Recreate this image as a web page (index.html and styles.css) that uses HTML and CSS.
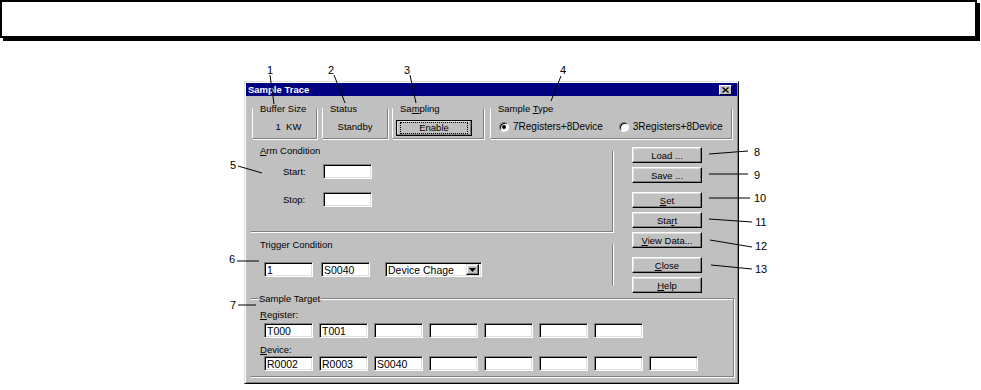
FILE: index.html
```html
<!DOCTYPE html>
<html>
<head>
  <title>Sample Trace</title>
  <link rel="stylesheet" href="styles.css">
</head>
<body>
  <div class="page">
    <div class="frame"></div>

    <div class="stage">
      <div class="dlg">
        <div class="cap">
          <span>Sample Trace</span>
          <span class="capx">
            <svg width="7" height="6" viewBox="0 0 7 6"><path d="M0.5 0.5 L6.5 5.5 M6.5 0.5 L0.5 5.5" stroke="#000" stroke-width="1.3"/></svg>
          </span>
        </div>

        <div class="row1">
          <div class="grp buf">
            <div class="ttl">Buffer Size</div>
            <div class="val">1 &nbsp;KW</div>
          </div>
          <div class="grp stat">
            <div class="ttl">Status</div>
            <div class="val">Standby</div>
          </div>
          <div class="grp samp">
            <div class="ttl">Sa<u>m</u>pling</div>
            <div class="btn def"><span class="focus">Enable</span></div>
          </div>
          <div class="grp type">
            <div class="ttl">Sample <u>T</u>ype</div>
            <div class="radios">
              <span class="radio on"></span><span class="rlbl">7Registers+8Device</span>
              <span class="radio r2"></span><span class="rlbl">3Registers+8Device</span>
            </div>
          </div>
        </div>

        <div class="mid">
          <div class="left">
            <div class="grp2 arm">
              <div class="ttl"><u>A</u>rm Condition</div>
              <div class="armrows">
                <span>Start:</span><span class="fld"></span>
                <span>Stop:</span><span class="fld"></span>
              </div>
            </div>
            <div class="grp2 trg">
              <div class="ttl">Trigger Condition</div>
              <div class="trgrow">
                <span class="fld">1</span>
                <span class="fld">S0040</span>
                <span class="fld sel">Device Chage<span class="arrow"><svg width="7" height="4" viewBox="0 0 7 4"><path d="M0 0 H7 L3.5 4 Z" fill="#000"/></svg></span></span>
              </div>
            </div>
          </div>

          <div class="btns">
            <div class="bgrp">
              <div class="btn">Load ...</div>
              <div class="btn">Save ...</div>
            </div>
            <div class="bgrp">
              <div class="btn"><u>S</u>et</div>
              <div class="btn">Sta<u>r</u>t</div>
              <div class="btn"><u>V</u>iew Data...</div>
            </div>
            <div class="bgrp">
              <div class="btn"><u>C</u>lose</div>
              <div class="btn"><u>H</u>elp</div>
            </div>
          </div>
        </div>

        <div class="grp3">
          <div class="ttl">Sample Target</div>
          <div class="sub"><u>R</u>egister:</div>
          <div class="fields">
            <span class="fld">T000</span>
            <span class="fld">T001</span>
            <span class="fld"></span>
            <span class="fld"></span>
            <span class="fld"></span>
            <span class="fld"></span>
            <span class="fld"></span>
          </div>
          <div class="sub dev"><u>D</u>evice:</div>
          <div class="fields dfields">
            <span class="fld">R0002</span>
            <span class="fld">R0003</span>
            <span class="fld">S0040</span>
            <span class="fld"></span>
            <span class="fld"></span>
            <span class="fld"></span>
            <span class="fld"></span>
            <span class="fld"></span>
          </div>
        </div>
      </div>
    </div>

    <!-- callout numbers drawn over the screenshot -->
    <svg class="callouts" width="981" height="390" viewBox="0 0 981 390">
      <g stroke="#000" stroke-width="1" fill="none">
        <path d="M270 75 L274 104"/>
        <path d="M334 75 L345 103"/>
        <path d="M410 75 L416 103"/>
        <path d="M561 76 L551 101"/>
        <path d="M238 166 L262 173"/>
        <path d="M237 261 L259 261"/>
        <path d="M238 305 L256 305"/>
        <path d="M709 154 L748 151"/>
        <path d="M709 174 L748 174"/>
        <path d="M709 198 L750 198"/>
        <path d="M709 219 L752 222"/>
        <path d="M710 240 L752 247"/>
        <path d="M711 265 L752 269"/>
      </g>
      <g class="nums" text-anchor="middle">
        <text x="270" y="74">1</text>
        <text x="331" y="74">2</text>
        <text x="407" y="74">3</text>
        <text x="563" y="74">4</text>
        <text x="233" y="169">5</text>
        <text x="232" y="263">6</text>
        <text x="233" y="309">7</text>
        <text x="757" y="156">8</text>
        <text x="757" y="179">9</text>
        <text x="760" y="202">10</text>
        <text x="761" y="226">11</text>
        <text x="761" y="250">12</text>
        <text x="761" y="273">13</text>
      </g>
    </svg>
  </div>
</body>
</html>
```

FILE: styles.css
```css
body {
  margin: 0;
  background: #fff;
  overflow: hidden;
}
.page {
  position: relative;
  width: 981px;
  height: 390px;
}
.frame {
  width: 977px;
  height: 38px;
  box-sizing: border-box;
  border: 2px solid #000;
  box-shadow: 3px 3px 0 #000;
}
.stage {
  padding-left: 244px;
  margin-top: 43px;
}

/* dialog */
.dlg {
  width: 495px;
  height: 303px;
  box-sizing: border-box;
  padding: 1px;
  background: #c0c0c0;
  border: 1px solid;
  border-color: #dfdfdf #000 #000 #dfdfdf;
  box-shadow: inset 1px 1px 0 #fff, inset -1px -1px 0 #808080;
  font-family: "Liberation Sans", Arial, sans-serif;
  font-size: 9.5px;
  font-weight: 400;
  color: #000;
}
.cap {
  height: 13px;
  display: flex;
  align-items: center;
  justify-content: space-between;
  padding-left: 2px;
  background: #000080;
  color: #fff;
  font-weight: bold;
}
.capx {
  width: 13px;
  height: 10px;
  margin-right: 5px;
  box-sizing: border-box;
  display: flex;
  align-items: center;
  justify-content: center;
  background: #c0c0c0;
  border: 1px solid;
  border-color: #fff #000 #000 #fff;
}

u {
  text-decoration-thickness: 1px;
  text-underline-offset: 1px;
}

.ttl {
  width: fit-content;
  margin-top: -6px;
  margin-left: 6px;
  padding: 0 1px;
  line-height: 11px;
  background: #c0c0c0;
}

/* top row of small group boxes */
.row1 {
  display: flex;
  margin-top: 12px;
  margin-left: 6px;
}
.grp {
  height: 31px;
  box-sizing: border-box;
  margin-right: 5px;
  border: 1px solid;
  border-color: #c0c0c0 #808080 #808080 #fff;
  box-shadow: 1px 1px 0 #fff;
}
.buf { width: 65px; }
.stat { width: 66px; margin-right: 4px; }
.samp { width: 92px; margin-right: 6px; }
.type { width: 242px; }
.val {
  margin-top: 7px;
  line-height: 11px;
  text-align: center;
}
.buf .val { padding-left: 8px; }

.btn {
  width: 70px;
  height: 16px;
  box-sizing: border-box;
  display: flex;
  align-items: center;
  justify-content: center;
  background: #c0c0c0;
  border: 1px solid;
  border-color: #fff #000 #000 #fff;
  box-shadow: inset -1px -1px 0 #808080, inset 1px 1px 0 #dfdfdf;
  font-weight: 400;
}
.def {
  width: 76px;
  margin: 6px 0 0 3px;
  padding: 1px 3px;
  outline: 1px solid #000;
  outline-offset: -1px;
}
.focus {
  flex: 1;
  align-self: stretch;
  display: flex;
  align-items: center;
  justify-content: center;
  border: 1px dotted #000;
  line-height: 10px;
}

.radios {
  display: flex;
  align-items: center;
  margin-top: 7px;
  margin-left: 8px;
  line-height: 11px;
  font-size: 10px;
}
.radio {
  width: 10px;
  height: 10px;
  box-sizing: border-box;
  border-radius: 50%;
  background: #fff;
  border: 1px solid;
  border-color: #808080 #fff #fff #808080;
  box-shadow: inset 1px 1px 0 #000;
  display: flex;
  align-items: center;
  justify-content: center;
  margin-right: 4px;
}
.radio.on::after {
  content: "";
  width: 4px;
  height: 4px;
  border-radius: 50%;
  background: #000;
}
.r2 { margin-left: 16px; }

/* middle area */
.mid {
  display: flex;
  margin-top: 8px;
}
.left {
  width: 363px;
  margin-left: 4px;
  padding-top: 3px;
}
.grp2 {
  box-sizing: border-box;
  border: 1px solid;
  border-color: #c0c0c0 #808080 #808080 #c0c0c0;
  box-shadow: 1px 1px 0 #fff;
}
.grp2 .ttl { margin-left: 8px; }
.arm { height: 82px; }
.trg {
  height: 42px;
  margin-top: 12px;
  border-bottom-color: #c0c0c0;
  box-shadow: 1px 0 0 #fff;
}
.armrows {
  display: grid;
  grid-template-columns: 40px 49px;
  row-gap: 13px;
  align-items: center;
  margin-top: 8px;
  padding-left: 32px;
}

.fld {
  width: 49px;
  height: 15px;
  box-sizing: border-box;
  display: flex;
  align-items: center;
  padding-left: 2px;
  background: #fff;
  border: 1px solid;
  border-color: #808080 #fff #fff #808080;
  box-shadow: inset 1px 1px 0 #000, inset -1px -1px 0 #dfdfdf;
  font-size: 10.5px;
  white-space: nowrap;
}
.trgrow {
  display: flex;
  gap: 8px;
  margin-top: 12px;
  padding-left: 13px;
}
.sel {
  width: 97px;
  margin-left: 7px;
  justify-content: space-between;
  padding-right: 2px;
}
.arrow {
  width: 13px;
  height: 11px;
  box-sizing: border-box;
  display: flex;
  align-items: center;
  justify-content: center;
  background: #c0c0c0;
  border: 1px solid;
  border-color: #dfdfdf #000 #000 #dfdfdf;
  box-shadow: inset -1px -1px 0 #808080, inset 1px 1px 0 #fff;
}

.btns {
  display: flex;
  flex-direction: column;
  gap: 9px;
  margin-left: 19px;
}
.bgrp {
  display: flex;
  flex-direction: column;
  gap: 4px;
}

/* sample target */
.grp3 {
  width: 484px;
  box-sizing: border-box;
  margin: 5px 0 0 4px;
  padding-bottom: 5px;
  border: 1px solid;
  border-color: #808080 #808080 #808080 #c0c0c0;
  box-shadow: 1px 1px 0 #fff, inset 0 1px 0 #fff;
}
.grp3 .ttl { margin-left: 7px; }
.sub {
  margin: 5px 0 0 9px;
  line-height: 11px;
}
.sub.dev { margin-top: 6px; }
.fields {
  display: flex;
  gap: 6px;
  margin-top: 3px;
  padding-left: 13px;
}
.dfields { margin-top: 1px; }

.callouts {
  position: absolute;
  left: 0;
  top: 0;
  pointer-events: none;
}
.nums {
  font-family: "Liberation Sans", Arial, sans-serif;
  font-size: 11px;
  fill: #000;
}
```
